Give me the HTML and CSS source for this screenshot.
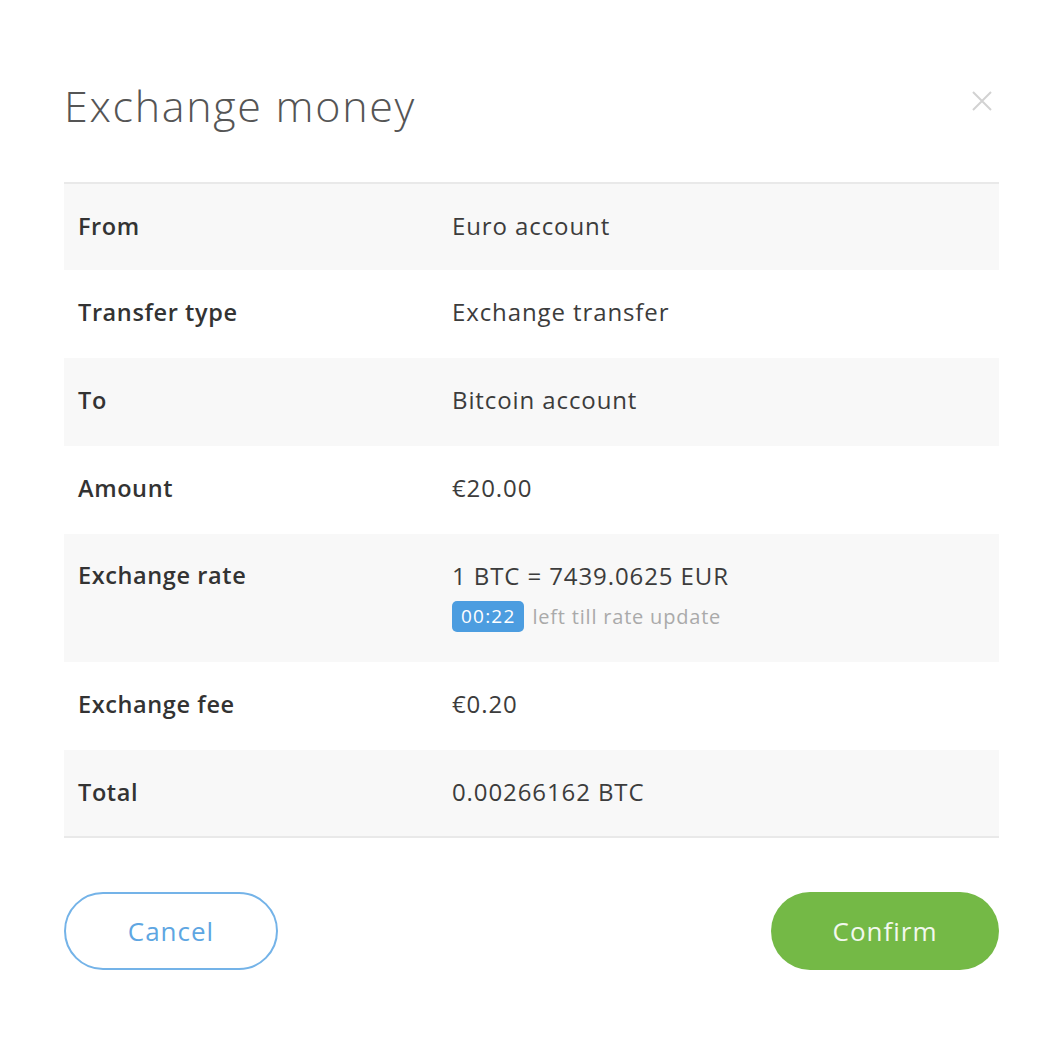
FILE: index.html
```html
<!DOCTYPE html>
<html>
<head>
<meta charset="utf-8">
<link rel="stylesheet" href="styles.css">
</head>
<body>
<div class="modal">
  <div class="header">
    <h1 class="title">Exchange money</h1>
    <div class="close">
      <svg width="22" height="22" viewBox="0 0 22 22"><path d="M2 2L20 20M20 2L2 20" stroke="#d2d2d2" stroke-width="2" fill="none"/></svg>
    </div>
  </div>
  <div class="table">
    <div class="row alt edge"><div class="label">From</div><div class="value">Euro account</div></div>
    <div class="row"><div class="label">Transfer type</div><div class="value">Exchange transfer</div></div>
    <div class="row alt"><div class="label">To</div><div class="value">Bitcoin account</div></div>
    <div class="row"><div class="label">Amount</div><div class="value">€20.00</div></div>
    <div class="row alt tall"><div class="label">Exchange rate</div><div class="value">1 BTC = 7439.0625 EUR<div class="timer"><span class="badge">00:22</span><span class="hint">left till rate update</span></div></div></div>
    <div class="row"><div class="label">Exchange fee</div><div class="value">€0.20</div></div>
    <div class="row alt edge"><div class="label">Total</div><div class="value">0.00266162 BTC</div></div>
  </div>
  <div class="actions">
    <button class="btn cancel">Cancel</button>
    <button class="btn confirm">Confirm</button>
  </div>
</div>
</body>
</html>
```
FILE: styles.css
```css
html, body { margin: 0; padding: 0; background: #fff; }
body { font-family: "Open Sans", Lato, sans-serif; }
.modal { width: 935px; padding: 78px 0 0 64px; }
.header { display: flex; justify-content: space-between; align-items: flex-start; height: 104px; }
.title { margin: 0; font-weight: 300; font-size: 43px; line-height: 56px; color: #555; letter-spacing: 1.7px; }
.close { margin: 12px 6px 0 0; }
.table { border-top: 2px solid #e9e9e9; border-bottom: 2px solid #e9e9e9; }
.row { display: flex; height: 88px; align-items: center; padding-bottom: 5px; box-sizing: border-box; }
.row.edge { height: 86px; padding-bottom: 3px; }
.row.alt { background: #f8f8f8; }
.row.tall { height: 128px; align-items: flex-start; padding-bottom: 0; }
.row.tall .label, .row.tall .value { padding-top: 25px; }
.label { width: 374px; padding-left: 14px; font-weight: 600; font-size: 23.5px; color: #333; letter-spacing: 0.6px; }
.value { font-size: 24px; color: #3c3c3c; letter-spacing: 0.9px; }
.timer { display: flex; align-items: center; margin-top: 9px; }
.badge { background: #4c9de0; color: #fff; font-size: 19px; border-radius: 5px; padding: 3px 9px; line-height: 25px; letter-spacing: 1.2px; }
.hint { color: #aaa; font-size: 20px; margin-left: 8px; letter-spacing: 0.8px; }
.actions { display: flex; justify-content: space-between; margin-top: 54px; }
.btn { font-family: "Open Sans", Lato, sans-serif; font-size: 26px; height: 78px; border-radius: 39px; cursor: pointer; letter-spacing: 1px; }
.cancel { width: 214px; background: #fff; border: 2px solid #74b3e8; color: #5ea6e2; }
.confirm { width: 228px; background: #74b946; border: none; color: #f2f8ee; }
```
